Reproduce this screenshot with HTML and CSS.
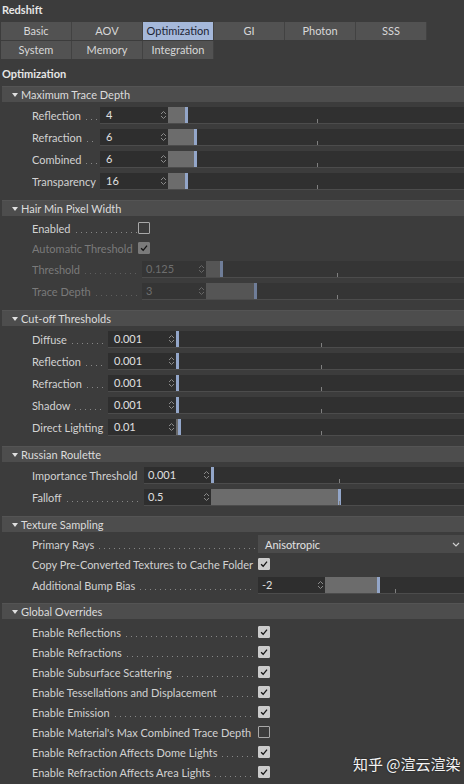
FILE: index.html
```html
<!DOCTYPE html>
<html>
<head>
<meta charset="utf-8">
<title>Redshift – Optimization</title>
<link rel="stylesheet" href="styles.css">
</head>
<body>
<div class="panel">
  <div class="title">Redshift</div>

  <div class="tabs">
    <div class="tab">Basic</div>
    <div class="tab">AOV</div>
    <div class="tab active">Optimization</div>
    <div class="tab">GI</div>
    <div class="tab">Photon</div>
    <div class="tab">SSS</div>
    <div class="tab">System</div>
    <div class="tab">Memory</div>
    <div class="tab">Integration</div>
  </div>

  <div class="heading">Optimization</div>

  <!-- Maximum Trace Depth -->
  <section class="group g-trace">
    <div class="group-head"><span class="tri"></span>Maximum Trace Depth</div>
    <div class="rows">
      <div class="row">
        <div class="label"><span>Reflection</span><i class="dots"></i></div>
        <div class="field">
          <div class="num"><span>4</span><svg class="spin" viewBox="0 0 7 12"><path d="M1 5L3.5 2.5L6 5M1 7L3.5 9.5L6 7"/></svg></div>
          <div class="slider"><div class="fill" style="width:20px"></div><i class="tick" style="left:149px"></i></div>
        </div>
      </div>
      <div class="row">
        <div class="label"><span>Refraction</span><i class="dots"></i></div>
        <div class="field">
          <div class="num"><span>6</span><svg class="spin" viewBox="0 0 7 12"><path d="M1 5L3.5 2.5L6 5M1 7L3.5 9.5L6 7"/></svg></div>
          <div class="slider"><div class="fill" style="width:29px"></div><i class="tick" style="left:149px"></i></div>
        </div>
      </div>
      <div class="row">
        <div class="label"><span>Combined</span><i class="dots"></i></div>
        <div class="field">
          <div class="num"><span>6</span><svg class="spin" viewBox="0 0 7 12"><path d="M1 5L3.5 2.5L6 5M1 7L3.5 9.5L6 7"/></svg></div>
          <div class="slider"><div class="fill" style="width:29px"></div><i class="tick" style="left:149px"></i></div>
        </div>
      </div>
      <div class="row">
        <div class="label"><span>Transparency</span><i class="dots"></i></div>
        <div class="field">
          <div class="num"><span>16</span><svg class="spin" viewBox="0 0 7 12"><path d="M1 5L3.5 2.5L6 5M1 7L3.5 9.5L6 7"/></svg></div>
          <div class="slider"><div class="fill" style="width:20px"></div><i class="tick" style="left:149px"></i></div>
        </div>
      </div>
    </div>
  </section>

  <!-- Hair Min Pixel Width -->
  <section class="group g-hair">
    <div class="group-head"><span class="tri"></span>Hair Min Pixel Width</div>
    <div class="rows">
      <div class="row short">
        <div class="label"><span>Enabled</span><i class="dots"></i></div>
        <span class="check"></span>
      </div>
      <div class="row short off">
        <div class="label"><span>Automatic Threshold</span><i class="dots"></i></div>
        <span class="check on"><svg viewBox="0 0 12 12"><path d="M2.5 6.3L5 8.8L9.6 3.2"/></svg></span>
      </div>
      <div class="row off">
        <div class="label"><span>Threshold</span><i class="dots"></i></div>
        <div class="field">
          <div class="num"><span>0.125</span><svg class="spin" viewBox="0 0 7 12"><path d="M1 5L3.5 2.5L6 5M1 7L3.5 9.5L6 7"/></svg></div>
          <div class="slider"><div class="fill" style="width:17px"></div><i class="tick" style="left:131px"></i></div>
        </div>
      </div>
      <div class="row off">
        <div class="label"><span>Trace Depth</span><i class="dots"></i></div>
        <div class="field">
          <div class="num"><span>3</span><svg class="spin" viewBox="0 0 7 12"><path d="M1 5L3.5 2.5L6 5M1 7L3.5 9.5L6 7"/></svg></div>
          <div class="slider"><div class="fill" style="width:51px"></div><i class="tick" style="left:131px"></i></div>
        </div>
      </div>
    </div>
  </section>

  <!-- Cut-off Thresholds -->
  <section class="group g-cut">
    <div class="group-head"><span class="tri"></span>Cut-off Thresholds</div>
    <div class="rows">
      <div class="row">
        <div class="label"><span>Diffuse</span><i class="dots"></i></div>
        <div class="field">
          <div class="num"><span>0.001</span><svg class="spin" viewBox="0 0 7 12"><path d="M1 5L3.5 2.5L6 5M1 7L3.5 9.5L6 7"/></svg></div>
          <div class="slider"><div class="fill" style="width:3px"></div><i class="tick" style="left:145px"></i></div>
        </div>
      </div>
      <div class="row">
        <div class="label"><span>Reflection</span><i class="dots"></i></div>
        <div class="field">
          <div class="num"><span>0.001</span><svg class="spin" viewBox="0 0 7 12"><path d="M1 5L3.5 2.5L6 5M1 7L3.5 9.5L6 7"/></svg></div>
          <div class="slider"><div class="fill" style="width:3px"></div><i class="tick" style="left:145px"></i></div>
        </div>
      </div>
      <div class="row">
        <div class="label"><span>Refraction</span><i class="dots"></i></div>
        <div class="field">
          <div class="num"><span>0.001</span><svg class="spin" viewBox="0 0 7 12"><path d="M1 5L3.5 2.5L6 5M1 7L3.5 9.5L6 7"/></svg></div>
          <div class="slider"><div class="fill" style="width:3px"></div><i class="tick" style="left:145px"></i></div>
        </div>
      </div>
      <div class="row">
        <div class="label"><span>Shadow</span><i class="dots"></i></div>
        <div class="field">
          <div class="num"><span>0.001</span><svg class="spin" viewBox="0 0 7 12"><path d="M1 5L3.5 2.5L6 5M1 7L3.5 9.5L6 7"/></svg></div>
          <div class="slider"><div class="fill" style="width:3px"></div><i class="tick" style="left:145px"></i></div>
        </div>
      </div>
      <div class="row">
        <div class="label"><span>Direct Lighting</span><i class="dots"></i></div>
        <div class="field">
          <div class="num"><span>0.01</span><svg class="spin" viewBox="0 0 7 12"><path d="M1 5L3.5 2.5L6 5M1 7L3.5 9.5L6 7"/></svg></div>
          <div class="slider"><div class="fill" style="width:5px"></div><i class="tick" style="left:145px"></i></div>
        </div>
      </div>
    </div>
  </section>

  <!-- Russian Roulette -->
  <section class="group g-rr">
    <div class="group-head"><span class="tri"></span>Russian Roulette</div>
    <div class="rows">
      <div class="row">
        <div class="label"><span>Importance Threshold</span><i class="dots"></i></div>
        <div class="field">
          <div class="num"><span>0.001</span><svg class="spin" viewBox="0 0 7 12"><path d="M1 5L3.5 2.5L6 5M1 7L3.5 9.5L6 7"/></svg></div>
          <div class="slider"><div class="fill" style="width:3px"></div><i class="tick" style="left:128px"></i></div>
        </div>
      </div>
      <div class="row">
        <div class="label"><span>Falloff</span><i class="dots"></i></div>
        <div class="field">
          <div class="num"><span>0.5</span><svg class="spin" viewBox="0 0 7 12"><path d="M1 5L3.5 2.5L6 5M1 7L3.5 9.5L6 7"/></svg></div>
          <div class="slider"><div class="fill" style="width:130px"></div><i class="tick" style="left:128px"></i></div>
        </div>
      </div>
    </div>
  </section>

  <!-- Texture Sampling -->
  <section class="group g-tex">
    <div class="group-head"><span class="tri"></span>Texture Sampling</div>
    <div class="rows">
      <div class="row short">
        <div class="label"><span>Primary Rays</span><i class="dots"></i></div>
        <div class="select"><span>Anisotropic</span><svg viewBox="0 0 8 5"><path d="M1 1L4 4L7 1"/></svg></div>
      </div>
      <div class="row short">
        <div class="label"><span>Copy Pre-Converted Textures to Cache Folder</span><i class="dots"></i></div>
        <span class="check on"><svg viewBox="0 0 12 12"><path d="M2.5 6.3L5 8.8L9.6 3.2"/></svg></span>
      </div>
      <div class="row">
        <div class="label"><span>Additional Bump Bias</span><i class="dots"></i></div>
        <div class="field">
          <div class="num"><span>-2</span><svg class="spin" viewBox="0 0 7 12"><path d="M1 5L3.5 2.5L6 5M1 7L3.5 9.5L6 7"/></svg></div>
          <div class="slider"><div class="fill" style="width:55px"></div><i class="tick" style="left:70px"></i></div>
        </div>
      </div>
    </div>
  </section>

  <!-- Global Overrides -->
  <section class="group g-glob">
    <div class="group-head"><span class="tri"></span>Global Overrides</div>
    <div class="rows">
      <div class="row short">
        <div class="label"><span>Enable Reflections</span><i class="dots"></i></div>
        <span class="check on"><svg viewBox="0 0 12 12"><path d="M2.5 6.3L5 8.8L9.6 3.2"/></svg></span>
      </div>
      <div class="row short">
        <div class="label"><span>Enable Refractions</span><i class="dots"></i></div>
        <span class="check on"><svg viewBox="0 0 12 12"><path d="M2.5 6.3L5 8.8L9.6 3.2"/></svg></span>
      </div>
      <div class="row short">
        <div class="label"><span>Enable Subsurface Scattering</span><i class="dots"></i></div>
        <span class="check on"><svg viewBox="0 0 12 12"><path d="M2.5 6.3L5 8.8L9.6 3.2"/></svg></span>
      </div>
      <div class="row short">
        <div class="label"><span>Enable Tessellations and Displacement</span><i class="dots"></i></div>
        <span class="check on"><svg viewBox="0 0 12 12"><path d="M2.5 6.3L5 8.8L9.6 3.2"/></svg></span>
      </div>
      <div class="row short">
        <div class="label"><span>Enable Emission</span><i class="dots"></i></div>
        <span class="check on"><svg viewBox="0 0 12 12"><path d="M2.5 6.3L5 8.8L9.6 3.2"/></svg></span>
      </div>
      <div class="row short">
        <div class="label"><span>Enable Material's Max Combined Trace Depth</span><i class="dots"></i></div>
        <span class="check"></span>
      </div>
      <div class="row short">
        <div class="label"><span>Enable Refraction Affects Dome Lights</span><i class="dots"></i></div>
        <span class="check on"><svg viewBox="0 0 12 12"><path d="M2.5 6.3L5 8.8L9.6 3.2"/></svg></span>
      </div>
      <div class="row short">
        <div class="label"><span>Enable Refraction Affects Area Lights</span><i class="dots"></i></div>
        <span class="check on"><svg viewBox="0 0 12 12"><path d="M2.5 6.3L5 8.8L9.6 3.2"/></svg></span>
      </div>
    </div>
  </section>

  <div class="watermark">知乎 @渲云渲染</div>
</div>
</body>
</html>
```

FILE: styles.css
```css
* { box-sizing: border-box; }

html, body {
  margin: 0;
  padding: 0;
  background: #3c3c3c;
}

body {
  width: 464px;
  height: 784px;
  overflow: hidden;
  font-family: Lato, "Liberation Sans", sans-serif;
  font-size: 11px;
  color: #d2d2d2;
}

.panel {
  position: relative;
  height: 784px;
}

.title {
  height: 20px;
  padding: 3px 0 0 2px;
  font-weight: bold;
  color: #e6e6e6;
  line-height: 13px;
}

/* tab strip: 6 equal columns, second row wraps */
.tabs {
  display: grid;
  grid-template-columns: repeat(6, 71px);
  gap: 1px 0;
  padding-left: 1px;
  margin-top: 2px;
}

.tab {
  height: 18px;
  line-height: 18px;
  text-align: center;
  background: #525252;
  border-right: 1px solid #424242;
  color: #d8d8d8;
}

.tab.active {
  background: #a5b8da;
  color: #1d2535;
}

.heading {
  height: 27px;
  padding: 8px 0 0 2px;
  font-weight: bold;
  color: #e6e6e6;
  line-height: 13px;
}

/* collapsible group */
.group-head {
  height: 16px;
  margin-left: 2px;
  background: #4d4d4d;
  border-top: 1px solid #545454;
  display: flex;
  align-items: center;
  padding-left: 10px;
  color: #dcdcdc;
  line-height: 14px;
}

.tri {
  width: 0;
  height: 0;
  border-left: 3px solid transparent;
  border-right: 3px solid transparent;
  border-top: 4px solid #e0e0e0;
  margin-right: 3px;
}

.rows {
  padding: 2px 0 8px;
}

.g-tex .rows { padding-bottom: 7px; }
.g-glob .rows { padding-top: 3px; }

.row {
  height: 22px;
  display: flex;
  align-items: center;
  padding-left: 32px;
}

.row.short { height: 20px; }

.label {
  width: var(--lw);
  flex: none;
  display: flex;
  align-items: center;
  white-space: nowrap;
  overflow: hidden;
  padding-right: 3px;
}

/* leader dots between a label and its control */
.dots {
  flex: 1;
  height: 9px;
  margin-left: 4px;
  background-image: linear-gradient(to right, #878787 0 1px, transparent 1px);
  background-size: 5px 1px;
  background-repeat: repeat-x;
  background-position: 1px 8px;
}

.g-trace { --lw: 68px; }
.g-hair  { --lw: 110px; }
.g-cut   { --lw: 76px; }
.g-rr    { --lw: 112px; }
.g-tex   { --lw: 226px; }
.g-glob  { --lw: 226px; }

/* numeric field + slider */
.field {
  flex: 1;
  height: 17px;
  display: flex;
  background: #2e2e2e;
  border-bottom: 1px solid #4c4c4c;
}

.num {
  width: 68px;
  flex: none;
  display: flex;
  align-items: center;
  justify-content: space-between;
  padding: 0 1px 0 6px;
  color: #e0e0e0;
}

.g-hair .num { width: 64px; padding-left: 4px; }
.g-rr .num, .g-tex .num { width: 67px; padding-left: 4px; }

.spin {
  width: 7px;
  height: 12px;
  fill: none;
  stroke: #8a8a8a;
  stroke-width: 1;
}

.slider {
  flex: 1;
  position: relative;
  background: #303030;
}

.fill {
  height: 100%;
  background: #6c6c6c;
  border-right: 3px solid #93a6c9;
  min-width: 3px;
}

.tick {
  position: absolute;
  bottom: 0;
  width: 1px;
  height: 4px;
  background: #808080;
}

/* checkbox */
.check {
  width: 12px;
  height: 12px;
  flex: none;
  border: 1px solid #a8a8a8;
  border-radius: 1px;
  display: flex;
}

.check.on {
  background: #cbcbcb;
  border-color: #cbcbcb;
}

.check svg {
  width: 10px;
  height: 10px;
  fill: none;
  stroke: #151515;
  stroke-width: 1.6;
}

.g-hair .check { margin-left: -4px; }

/* disabled rows */
.row.off .label { color: #7a7a7a; }
.row.off .dots { background-image: linear-gradient(to right, #5e5e5e 0 1px, transparent 1px); }
.row.off .num { color: #6e6e6e; }
.row.off .field { background: #353535; }
.row.off .slider { background: #353535; }
.row.off .fill { background: #555; border-right-color: #6f7d98; }
.row.off .spin { stroke: #666; }
.row.off .check.on { background: #7a7a7a; border-color: #7a7a7a; }

/* dropdown */
.select {
  flex: 1;
  height: 18px;
  display: flex;
  align-items: center;
  justify-content: space-between;
  padding: 0 4px 0 7px;
  background: #4b4b4b;
  color: #e2e2e2;
}

.select svg {
  width: 8px;
  height: 5px;
  fill: none;
  stroke: #cfcfcf;
  stroke-width: 1.2;
}

.watermark {
  position: absolute;
  left: 353px;
  top: 753px;
  font-family: "Noto Sans CJK SC", sans-serif;
  font-size: 15px;
  color: #f4f4f4;
  text-shadow: 0 0 2px rgba(0, 0, 0, 0.7);
  white-space: nowrap;
}
```
